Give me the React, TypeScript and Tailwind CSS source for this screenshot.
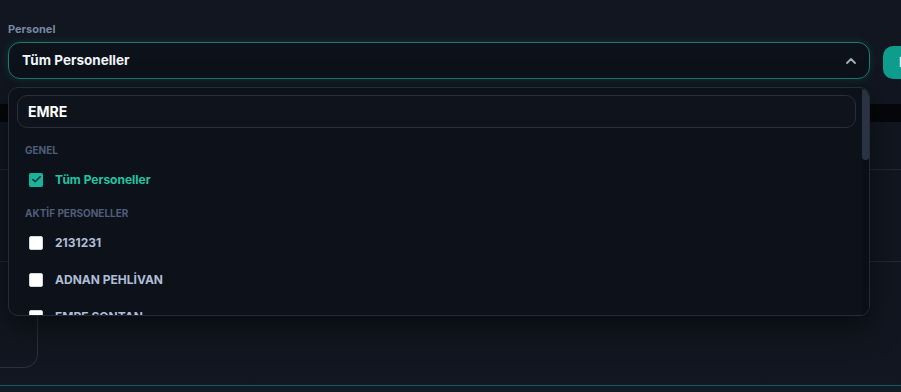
import { ChevronUp, Check } from "lucide-react";

const groups = [
    { title: "GENEL", items: [{ name: "Tüm Personeller", checked: true }] },
    {
        title: "AKTİF PERSONELLER",
        items: [
            { name: "2131231", checked: false },
            { name: "ADNAN PEHLİVAN", checked: false },
            { name: "EMRE SONTAN", checked: false },
        ],
    },
];

const Row = ({ name, checked }: { name: string; checked: boolean }) => (
    <div className="h-[37px] flex items-center gap-3 pl-[20px]">
        {checked ? (
            <span className="w-[14px] h-[14px] rounded-[2px] bg-[#19b39c] flex items-center justify-center">
                <Check size={11} strokeWidth={3.5} className="text-[#17333a]" />
            </span>
        ) : (
            <span className="w-[14px] h-[14px] rounded-[2px] bg-white border border-[#cfd6e0]" />
        )}
        <span
            className={
                checked
                    ? "text-[12px] font-bold text-[#21c4a4]"
                    : "text-[12px] font-bold text-[#afbdd6]"
            }
        >
            {name}
        </span>
    </div>
);

export default function App() {
    return (
        <div className="relative w-[901px] h-[392px] overflow-hidden bg-[#111620] font-['Inter','Liberation_Sans',sans-serif]">
            <div className="pl-2 pt-[22px]">
                <p className="text-[11px] leading-[14px] font-bold text-[#7787a3]">
                    Personel
                </p>
                <div className="mt-[6px] flex items-end gap-[13px]">
                    <div className="w-[862px] shrink-0 h-[37px] rounded-[12px] border border-[#1c7a6f] bg-[#0d111a] shadow-[0_0_8px_rgba(20,184,166,0.18)] flex items-center justify-between pl-[13px] pr-[10px]">
                        <span className="text-[13.5px] font-bold text-[#f1f5f9]">
                            Tüm Personeller
                        </span>
                        <ChevronUp size={16} strokeWidth={2.75} className="text-[#a3adbd]" />
                    </div>
                    <div className="w-[60px] shrink-0 h-[33px] rounded-l-[10px] bg-[#0e9c8c] flex items-center pl-[16px] text-[13px] font-bold text-white">
                        Filtrele
                    </div>
                </div>
            </div>

            {/* page content behind the open list */}
            <div className="mt-[25px] h-[18px] bg-[#05070a]" />
            <div className="h-[48px] border-b border-[#222935]" />
            <div className="h-[92px] border-b border-[#222935]" />
            <div className="h-[106px]">
                <div className="w-[38px] h-full border-r border-b border-[#2a313d] rounded-br-[14px]" />
            </div>
            <div className="h-[17px] bg-gradient-to-b from-[#111620] to-[#121821]" />
            <div className="h-[7px] border-t border-[#1c5663] bg-[#0f1c24]" />

            {/* open dropdown */}
            <div className="absolute left-2 top-[87px] w-[862px] h-[229px] rounded-[10px] border border-[#252c39] bg-[#0d111a] shadow-[0_10px_30px_rgba(0,0,0,0.5)] overflow-hidden flex">
                <div className="flex-1 flex flex-col">
                    <div className="pt-[7px] pl-[8px] pr-[6px]">
                        <div className="h-[33px] rounded-[10px] border border-[#272f3d] bg-[#0f131c] flex items-center pl-[10px] text-[14px] font-bold text-white">
                            EMRE
                        </div>
                    </div>
                    {groups.map((g, i) => (
                        <div key={g.title}>
                            <p
                                className={
                                    i === 0
                                        ? "mt-[16px] mb-[5px] pl-[16px] text-[10px] leading-[12px] font-bold text-[#4f5e79]"
                                        : "mt-[9px] mb-[5px] pl-[16px] text-[10px] leading-[12px] font-bold text-[#4f5e79]"
                                }
                            >
                                {g.title}
                            </p>
                            {g.items.map((it) => (
                                <Row key={it.name} name={it.name} checked={it.checked} />
                            ))}
                        </div>
                    ))}
                </div>
                <div className="w-[7px] bg-[#0b0e15]">
                    <div className="h-[72px] rounded-full bg-[#2a3342]" />
                </div>
            </div>
        </div>
    );
}
